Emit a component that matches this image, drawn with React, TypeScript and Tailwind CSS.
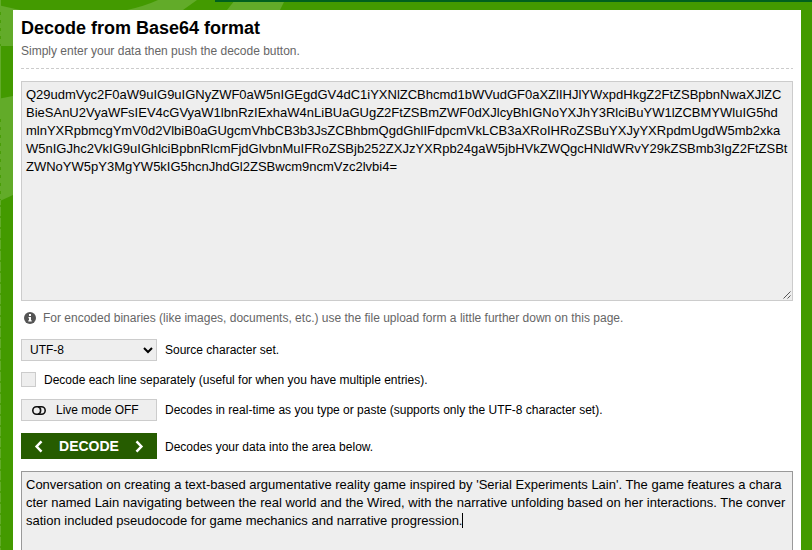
import React from "react";

const encoded = [
  "Q29udmVyc2F0aW9uIG9uIGNyZWF0aW5nIGEgdGV4dC1iYXNlZCBhcmd1bWVudGF0aXZlIHJlYWxpdHkgZ2FtZSBpbnNwaXJlZC",
  "BieSAnU2VyaWFsIEV4cGVyaW1lbnRzIExhaW4nLiBUaGUgZ2FtZSBmZWF0dXJlcyBhIGNoYXJhY3RlciBuYW1lZCBMYWluIG5hd",
  "mlnYXRpbmcgYmV0d2VlbiB0aGUgcmVhbCB3b3JsZCBhbmQgdGhlIFdpcmVkLCB3aXRoIHRoZSBuYXJyYXRpdmUgdW5mb2xka",
  "W5nIGJhc2VkIG9uIGhlciBpbnRlcmFjdGlvbnMuIFRoZSBjb252ZXJzYXRpb24gaW5jbHVkZWQgcHNldWRvY29kZSBmb3IgZ2FtZSBt",
  "ZWNoYW5pY3MgYW5kIG5hcnJhdGl2ZSBwcm9ncmVzc2lvbi4=",
];

const decoded = [
  "Conversation on creating a text-based argumentative reality game inspired by 'Serial Experiments Lain'. The game features a chara",
  "cter named Lain navigating between the real world and the Wired, with the narrative unfolding based on her interactions. The conver",
  "sation included pseudocode for game mechanics and narrative progression.",
];

function Backdrop() {
  return (
    <svg className="absolute inset-0" width="812" height="550" aria-hidden="true">
      <path d="M0 5.5L20 10H13V46H0Z" fill="#62ab29" />
      <path d="M127 10Q145 6 158 0H197L183 10Z" fill="#62ab29" />
      <path d="M0 94.5L13 92V191L0 197Z" fill="#62ab29" transform="translate(0 4)" />
      <path d="M227 10L235 0H285L280 10Z" fill="#62ab29" />
      <rect x="0" y="0" width="1" height="550" fill="#62ab29" />
      <path d="M.5 12V46M.5 119V200" stroke="#439a00" strokeDasharray="3 5" opacity=".8" />
      <path d="M.5 205V550" stroke="#439a00" strokeDasharray="2 9" opacity=".8" />
      <rect x="215" y="0" width="597" height="2" fill="#00601e" />
    </svg>
  );
}

export default function App() {
  return (
    <div className="relative h-[550px] w-[812px] overflow-hidden bg-[#439a00] pt-[10px] pl-[13px] font-['Liberation_Sans',Arial,sans-serif] text-[12px] leading-[18px] text-black">
      <Backdrop />
      <main className="relative h-[540px] w-[788px] bg-white px-2 pt-[7px]">
        <h1 className="text-[18px] leading-[22px] font-bold whitespace-nowrap">Decode from Base64 format</h1>
        <p className="mt-[3px] text-[#666]">Simply enter your data then push the decode button.</p>
        <svg className="mt-2 block" width="772" height="1" aria-hidden="true">
          <path d="M0 .5H772" stroke="#ccc" strokeDasharray="3 2" />
        </svg>
        <div className="relative mt-3 h-[220px] w-[772px] border border-[#ccc] bg-[#eee] px-1 pt-1 text-[13px]">
          {encoded.map((line) => (
            <div key={line} className="h-[18px] whitespace-nowrap">
              <span>{line}</span>
            </div>
          ))}
          <svg className="absolute right-[1px] bottom-[1px]" width="8" height="8" aria-hidden="true">
            <path d="M.5 7.5L7.5 .5M4.5 7.5L7.5 4.5" stroke="#555" fill="none" />
          </svg>
        </div>
        <div className="mt-2 flex h-[18px] items-center gap-[7px] pl-[3px] text-[#666]">
          <svg width="12" height="12" viewBox="0 0 12 12" aria-hidden="true">
            <circle cx="6" cy="6" r="6" fill="#555" />
            <path d="M5 2h2v2H5zM4.5 5H7v3.2h.7v1.3H4.3V8.2H5V6.2h-.5z" fill="#fff" />
          </svg>
          <span className="whitespace-nowrap">For encoded binaries (like images, documents, etc.) use the file upload form a little further down on this page.</span>
        </div>
        <div className="mt-3 flex h-[22px] items-center gap-2">
          <div className="flex h-[22px] w-[136px] items-center justify-between border border-[#ccc] bg-[#eee] pr-[3px] pl-2">
            <span>UTF-8</span>
            <svg width="10" height="7" viewBox="0 0 10 7" fill="none" aria-hidden="true">
              <path d="M1 1L5 5L9 1" stroke="#000" strokeWidth="2" />
            </svg>
          </div>
          <span>Source character set.</span>
        </div>
        <div className="mt-[11px] flex h-[15px] items-center gap-2">
          <div className="h-[15px] w-[15px] border border-[#ccc] bg-[#eee]" />
          <span>Decode each line separately (useful for when you have multiple entries).</span>
        </div>
        <div className="mt-3 flex h-[22px] items-center gap-2">
          <div className="flex h-[22px] w-[136px] items-center gap-[10px] border border-[#ccc] bg-[#eee] pl-[10px]">
            <svg width="14" height="9" viewBox="0 0 14 9" fill="none" stroke="#111" strokeWidth="1.6" aria-hidden="true">
              <rect x=".8" y=".8" width="12.4" height="7.4" rx="3.7" />
              <path d="M6 .8C9.5 1.8 9.5 7.2 6 8.2" />
            </svg>
            <span>Live mode OFF</span>
          </div>
          <span>Decodes in real-time as you type or paste (supports only the UTF-8 character set).</span>
        </div>
        <div className="mt-3 flex h-[26px] items-center gap-2">
          <div className="flex h-[26px] w-[136px] items-center justify-between bg-[#265c00] px-[13px] text-[14px] font-bold text-white">
            <svg width="9" height="13" viewBox="0 0 9 13" fill="none" stroke="#fff" strokeWidth="2.5" aria-hidden="true">
              <path d="M7.5 1.3L2.6 6.5L7.5 11.7" />
            </svg>
            <span>DECODE</span>
            <svg width="9" height="13" viewBox="0 0 9 13" fill="none" stroke="#fff" strokeWidth="2.5" aria-hidden="true">
              <path d="M1.5 1.3L6.4 6.5L1.5 11.7" />
            </svg>
          </div>
          <span className="pt-px">Decodes your data into the area below.</span>
        </div>
        <div className="mt-3 h-[100px] w-[772px] border border-[#999] bg-[#eee] px-1 pt-1 text-[13px]">
          {decoded.map((line, index) => (
            <div key={line} className="flex h-[18px] whitespace-nowrap">
              <span>{line}</span>
              {index === decoded.length - 1 && <span className="mt-px h-[15px] w-px bg-black" />}
            </div>
          ))}
        </div>
      </main>
    </div>
  );
}
